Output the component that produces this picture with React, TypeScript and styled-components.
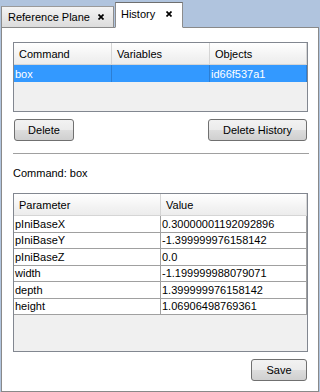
import React from 'react'
import styled, { createGlobalStyle } from 'styled-components'

const Global = createGlobalStyle`
  html, body { margin: 0; padding: 0; background: #fff; }
  body { font-family: "Liberation Sans", Arial, sans-serif; font-size: 11px; color: #000; }
`

const Window = styled.div`
  width: 320px;
  height: 392px;
  display: flex;
  flex-direction: column;
  background: #b0c4de;
  overflow: hidden;
`

const TabBar = styled.div`
  height: 27px;
  display: flex;
  align-items: flex-end;
  gap: 1px;
  padding-left: 1px;
  flex-shrink: 0;
`

const Tab = styled.div<{ active?: boolean }>`
  position: relative;
  z-index: ${({ active }) => (active ? 2 : 1)};
  display: flex;
  align-items: center;
  box-sizing: border-box;
  height: ${({ active }) => (active ? '26px' : '21px')};
  margin-bottom: ${({ active }) => (active ? '-1px' : '0')};
  padding: ${({ active }) => (active ? '0 10px 3px 5px' : '0 9px 0 6px')};
  border: 1px solid #8c8c8c;
  border-bottom: ${({ active }) => (active ? '1px solid #fff' : 'none')};
  border-top-color: ${({ active }) => (active ? '#6f6f6f' : '#9a9a9a')};
  background: ${({ active }) => (active ? '#fff' : 'linear-gradient(#f4f4f4, #dcdcdc)')};
  font-size: 11px;
  color: #000;
  white-space: nowrap;
`

const TabLabel = styled.span<{ gap: number }>`
  margin-right: ${({ gap }) => gap}px;
`

const CloseIcon = () => (
  <svg width="6" height="6" viewBox="0 0 6 6">
    <path d="M0.5 0.5 L5.5 5.5 M5.5 0.5 L0.5 5.5" stroke="#000" strokeWidth="1.7" />
  </svg>
)

const Panel = styled.div`
  flex: 1;
  margin: 0 1px;
  border: 1px solid #898989;
  background: #fff;
  display: flex;
  flex-direction: column;
  padding: 14px 10px 0 11px;
`

const Table = styled.div<{ cols: string; height: number }>`
  display: grid;
  grid-template-columns: ${({ cols }) => cols};
  grid-auto-rows: min-content;
  align-content: start;
  height: ${({ height }) => height}px;
  box-sizing: border-box;
  border: 1px solid #828790;
  background: #f0f0f0;
  width: 295px;
`

const HeadCell = styled.div`
  height: 22px;
  box-sizing: border-box;
  display: flex;
  align-items: center;
  padding-left: 5px;
  background: linear-gradient(#ffffff, #f3f3f3 60%, #ececec);
  border-right: 1px solid #d5d5d5;
  border-bottom: 1px solid #d5d5d5;
`

const SelCell = styled.div`
  height: 17px;
  box-sizing: border-box;
  display: flex;
  align-items: center;
  padding-left: 1px;
  background: #3399ff;
  color: #fff;
  border-right: 1px solid #2c7ed4;
`

const Cell = styled.div`
  height: 16.5px;
  box-sizing: border-box;
  display: flex;
  align-items: center;
  padding-left: 1px;
  background: #fff;
  border-right: 1px solid #a0a0a0;
  border-bottom: 1px solid #a0a0a0;
`

const ButtonRow = styled.div<{ align: string }>`
  display: flex;
  justify-content: ${({ align }) => align};
  padding: 0 1px 0 1px;
`

const Button = styled.button<{ w: number }>`
  width: ${({ w }) => w}px;
  height: 22px;
  box-sizing: border-box;
  border: 1px solid #707070;
  border-radius: 3px;
  background: linear-gradient(#f2f2f2 0%, #ebebeb 50%, #dddddd 51%, #cfcfcf 100%);
  font-family: "Liberation Sans", Arial, sans-serif;
  font-size: 11px;
  color: #000;
  padding: 0;
`

const Separator = styled.div`
  height: 1px;
  background: #a0a0a0;
  margin: 12px 0 0 0;
  width: 296px;
`

const Caption = styled.div`
  margin-top: 12px;
  height: 14px;
  line-height: 14px;
`

const history = [{ command: 'box', variables: '', objects: 'id66f537a1' }]

const params: [string, string][] = [
  ['pIniBaseX', '0.30000001192092896'],
  ['pIniBaseY', '-1.399999976158142'],
  ['pIniBaseZ', '0.0'],
  ['width', '-1.199999988079071'],
  ['depth', '1.399999976158142'],
  ['height', '1.06906498769361'],
]

const App = () => {
  return (
    <Window>
      <Global />
      <TabBar>
        <Tab>
          <TabLabel gap={8}>Reference Plane</TabLabel>
          <CloseIcon />
        </Tab>
        <Tab active>
          <TabLabel gap={11}>History</TabLabel>
          <CloseIcon />
        </Tab>
      </TabBar>
      <Panel>
        <Table cols="98px 98px 97px" height={70}>
          <HeadCell>Command</HeadCell>
          <HeadCell>Variables</HeadCell>
          <HeadCell>Objects</HeadCell>
          {history.map((h, i) => (
            <React.Fragment key={i}>
              <SelCell>{h.command}</SelCell>
              <SelCell>{h.variables}</SelCell>
              <SelCell>{h.objects}</SelCell>
            </React.Fragment>
          ))}
        </Table>
        <div style={{ height: 7 }} />
        <ButtonRow align="space-between">
          <Button w={60}>Delete</Button>
          <Button w={99}>Delete History</Button>
        </ButtonRow>
        <Separator />
        <Caption>Command: box</Caption>
        <div style={{ height: 13 }} />
        <Table cols="147px 146px" height={159}>
          <HeadCell>Parameter</HeadCell>
          <HeadCell>Value</HeadCell>
          {params.map(([k, v]) => (
            <React.Fragment key={k}>
              <Cell>{k}</Cell>
              <Cell>{v}</Cell>
            </React.Fragment>
          ))}
        </Table>
        <div style={{ height: 7 }} />
        <ButtonRow align="flex-end">
          <Button w={56}>Save</Button>
        </ButtonRow>
      </Panel>
    </Window>
  )
}

export default App
